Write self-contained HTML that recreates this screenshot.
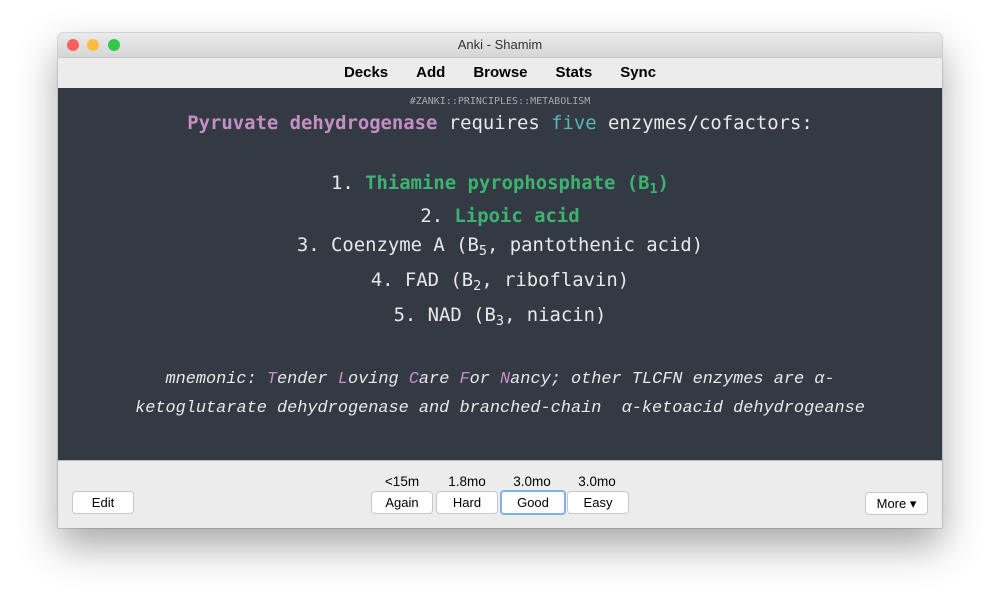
<!DOCTYPE html>
<html><head><meta charset="utf-8"><style>
body{margin:0;width:1000px;height:612px;background:#fff;position:relative;overflow:hidden;font-family:"Liberation Sans",sans-serif}
.win{position:absolute;left:58px;top:33px;width:884px;height:495px;box-shadow:0 18px 40px rgba(0,0,0,.35),0 0 0 1px rgba(0,0,0,.12);border-radius:5px 5px 0 0;overflow:hidden;background:#ececec}
.title{height:24px;background:linear-gradient(#ebebeb,#d6d6d6);text-align:center;font-size:13px;line-height:24px;color:#333;position:relative;border-bottom:1px solid #c8c8c8}
.dot{position:absolute;top:6px;width:12px;height:12px;border-radius:50%}
.tb{height:30px;background:#ececec;text-align:center;font-weight:bold;font-size:15px;line-height:30px;color:#000}
.tb span{margin:0 14px}
.card{position:absolute;top:55px;left:0;width:884px;height:372px;background:#343a44;color:#e8e8e8;font-family:"DejaVu Sans Mono",monospace;text-align:center}
.p{color:#c58fc5;font-weight:bold}
.g{color:#3cb371;font-weight:bold}
.t{color:#5ab6b6}
.l{position:absolute;left:0;width:884px;font-size:18.9px}
sub{font-size:13.5px;vertical-align:-4px;line-height:0}
.it{font-family:"Liberation Mono",monospace;font-style:italic;font-size:16.9px;letter-spacing:0}
.pm{color:#c58fc5}
.bot{position:absolute;top:427px;left:0;width:884px;height:68px;background:#ececec;border-top:1px solid #bbb}
.btn{position:absolute;height:21px;background:#fff;border:1px solid #c8c8c8;border-radius:4px;font-size:13px;line-height:21px;text-align:center;color:#000}
.lab{position:absolute;top:13px;font-size:13.5px;color:#000;text-align:center;width:66px}
</style></head><body>
<div class="win">
<div class="title"><div class="dot" style="left:9px;background:#fc605c"></div><div class="dot" style="left:29px;background:#fdbc40"></div><div class="dot" style="left:50px;background:#34c84a"></div>Anki - Shamim</div>
<div class="tb"><span>Decks</span><span>Add</span><span>Browse</span><span>Stats</span><span>Sync</span></div>
<div class="card">
<div class="l" style="top:8px;font-size:10px;color:#aaa">#ZANKI::PRINCIPLES::METABOLISM</div>
<div class="l" style="top:24px"><span class="p">Pyruvate dehydrogenase</span> requires <span class="t">five</span> enzymes/cofactors:</div>
<div class="l" style="top:84px">1. <span class="g">Thiamine pyrophosphate (B<sub>1</sub>)</span></div>
<div class="l" style="top:117px">2. <span class="g">Lipoic acid</span></div>
<div class="l" style="top:146px">3. Coenzyme A (B<sub>5</sub>, pantothenic acid)</div>
<div class="l" style="top:181px">4. FAD (B<sub>2</sub>, riboflavin)</div>
<div class="l" style="top:216px">5. NAD (B<sub>3</sub>, niacin)</div>
<div class="l it" style="top:282px">mnemonic: <span class="pm">T</span>ender <span class="pm">L</span>oving <span class="pm">C</span>are <span class="pm">F</span>or <span class="pm">N</span>ancy; other TLCFN enzymes are α-</div>
<div class="l it" style="top:311px">ketoglutarate dehydrogenase and branched-chain &nbsp;α-ketoacid dehydrogeanse</div>
</div>
<div class="bot">
<div class="btn" style="left:14px;top:30px;width:60px">Edit</div>
<div class="lab" style="left:311px">&lt;15m</div>
<div class="lab" style="left:376px">1.8mo</div>
<div class="lab" style="left:441px">3.0mo</div>
<div class="lab" style="left:506px">3.0mo</div>
<div class="btn" style="left:313px;top:30px;width:60px">Again</div>
<div class="btn" style="left:378px;top:30px;width:60px">Hard</div>
<div class="btn" style="left:442px;top:29px;width:62px;border:2px solid #7fb1ec">Good</div>
<div class="btn" style="left:509px;top:30px;width:60px">Easy</div>
<div class="btn" style="left:807px;top:31px;width:61px">More ▾</div>
</div>
</div>
</body></html>
